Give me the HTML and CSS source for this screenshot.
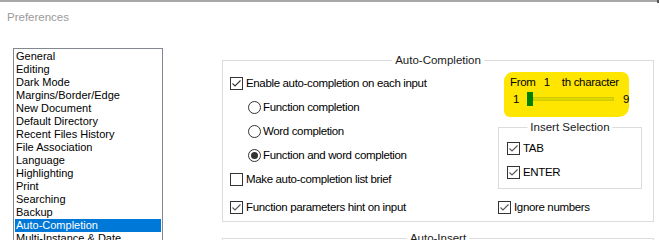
FILE: index.html
```
<!DOCTYPE html>
<html>
<head>
<meta charset="utf-8">
<link rel="stylesheet" href="styles.css">
</head>
<body>
<div class="frame-top"><span class="frame-corner"></span></div>
<div class="title">Preferences</div>
<div class="main">
  <div class="listbox">
    <div class="item">General</div>
    <div class="item">Editing</div>
    <div class="item">Dark Mode</div>
    <div class="item">Margins/Border/Edge</div>
    <div class="item">New Document</div>
    <div class="item">Default Directory</div>
    <div class="item">Recent Files History</div>
    <div class="item">File Association</div>
    <div class="item">Language</div>
    <div class="item">Highlighting</div>
    <div class="item">Print</div>
    <div class="item">Searching</div>
    <div class="item">Backup</div>
    <div class="item selected">Auto-Completion</div>
    <div class="item">Multi-Instance &amp; Date</div>
  </div>
  <div class="panel">
    <div class="group ac">
      <span class="group-title">Auto-Completion</span>
      <div class="ac-body">
        <div class="col-left">
          <div class="row">
            <svg class="box" width="13" height="13" viewBox="0 0 13 13"><rect x="0.5" y="0.5" width="12" height="12" fill="#fff" stroke="#333"/><polyline points="2.5,6.5 5,9 10.5,3.5" fill="none" stroke="#333" stroke-width="1.1"/></svg>
            <span class="lbl">Enable auto-completion on each input</span>
          </div>
          <div class="row sub">
            <svg class="box" width="13" height="13" viewBox="0 0 13 13"><circle cx="6.5" cy="6.5" r="6" fill="#fff" stroke="#333"/></svg>
            <span class="lbl r">Function completion</span>
          </div>
          <div class="row sub">
            <svg class="box" width="13" height="13" viewBox="0 0 13 13"><circle cx="6.5" cy="6.5" r="6" fill="#fff" stroke="#333"/></svg>
            <span class="lbl r">Word completion</span>
          </div>
          <div class="row sub">
            <svg class="box" width="13" height="13" viewBox="0 0 13 13"><circle cx="6.5" cy="6.5" r="6" fill="#fff" stroke="#333"/><circle cx="6.5" cy="6.5" r="3.5" fill="#333"/></svg>
            <span class="lbl r">Function and word completion</span>
          </div>
          <div class="row">
            <svg class="box" width="13" height="13" viewBox="0 0 13 13"><rect x="0.5" y="0.5" width="12" height="12" fill="#fff" stroke="#333"/></svg>
            <span class="lbl">Make auto-completion list brief</span>
          </div>
        </div>
        <div class="col-right">
          <div class="hl">
            <div class="from"><span>From</span><span class="num">1</span><span>th character</span></div>
            <div class="slider">
              <span class="smin">1</span>
              <span class="thumb"></span>
              <span class="track"></span>
              <span class="smax">9</span>
            </div>
          </div>
          <div class="group ins">
            <span class="group-title">Insert Selection</span>
            <div class="row">
              <svg class="box" width="13" height="13" viewBox="0 0 13 13"><rect x="0.5" y="0.5" width="12" height="12" fill="#fff" stroke="#333"/><polyline points="2.5,6.5 5,9 10.5,3.5" fill="none" stroke="#555" stroke-width="1.1"/></svg>
              <span class="lbl">TAB</span>
            </div>
            <div class="row">
              <svg class="box" width="13" height="13" viewBox="0 0 13 13"><rect x="0.5" y="0.5" width="12" height="12" fill="#fff" stroke="#333"/><polyline points="2.5,6.5 5,9 10.5,3.5" fill="none" stroke="#555" stroke-width="1.1"/></svg>
              <span class="lbl">ENTER</span>
            </div>
          </div>
        </div>
      </div>
      <div class="ac-bottom">
        <div class="row bl">
          <svg class="box" width="13" height="13" viewBox="0 0 13 13"><rect x="0.5" y="0.5" width="12" height="12" fill="#fff" stroke="#333"/><polyline points="2.5,6.5 5,9 10.5,3.5" fill="none" stroke="#555" stroke-width="1.1"/></svg>
          <span class="lbl">Function parameters hint on input</span>
        </div>
        <div class="row">
          <svg class="box" width="13" height="13" viewBox="0 0 13 13"><rect x="0.5" y="0.5" width="12" height="12" fill="#fff" stroke="#333"/><polyline points="2.5,6.5 5,9 10.5,3.5" fill="none" stroke="#555" stroke-width="1.1"/></svg>
          <span class="lbl">Ignore numbers</span>
        </div>
      </div>
    </div>
    <div class="group ai">
      <span class="group-title">Auto-Insert</span>
    </div>
  </div>
</div>
</body>
</html>
```

FILE: styles.css
```
html, body {
  margin: 0;
  padding: 0;
  overflow: hidden;
  background: #fff;
}
body {
  width: 659px;
  height: 240px;
  font-family: "Liberation Sans", Arial, sans-serif;
  color: #000;
}
.frame-top {
  height: 2px;
  background: #a8a8a8;
  display: flex;
  justify-content: flex-end;
}
.frame-corner {
  width: 2px;
  height: 3px;
  background: #555;
}
.title {
  margin-top: 8px;
  padding-left: 7px;
  font-size: 11.5px;
  line-height: 14px;
  color: #9a9a9a;
}
.main {
  display: flex;
  align-items: flex-start;
  padding-left: 13px;
  margin-top: 24px;
}
.listbox {
  width: 146px;
  height: 200px;
  border: 1px solid #828790;
  border-bottom: 0;
  padding: 1px;
  font-size: 11px;
  flex: none;
}
.item {
  height: 13px;
  line-height: 13px;
  padding-left: 1px;
  white-space: nowrap;
}
.item.selected {
  background: #0078d7;
  color: #fff;
}
.panel {
  margin-left: 59px;
  margin-top: 12px;
  width: 432px;
  flex: none;
}
.group {
  position: relative;
  border: 1px solid #dcdcdc;
  box-sizing: border-box;
}
.group-title {
  position: absolute;
  top: -8px;
  left: 50%;
  transform: translateX(-50%);
  background: #fff;
  padding: 0 3px;
  font-size: 11.5px;
  line-height: 15px;
  white-space: nowrap;
  color: #1a1a1a;
}
.ac {
  padding-bottom: 2px;
}
.ac-body {
  display: flex;
  padding-top: 10px;
}
.col-left {
  width: 268px;
  padding-left: 7px;
}
.row {
  height: 24px;
  display: flex;
  align-items: center;
  font-size: 11.5px;
  letter-spacing: -0.35px;
  white-space: nowrap;
}
.row.sub {
  padding-left: 18px;
}
.box {
  flex: none;
  display: block;
}
.lbl {
  margin-left: 3px;
}
.lbl.r {
  margin-left: 2px;
}
.col-right {
  width: 154px;
  margin-top: 1px;
}
.hl {
  margin-left: 6px;
  width: 125px;
  height: 45px;
  box-sizing: border-box;
  background: #ffe600;
  border-radius: 9px 7px 10px 6px;
  padding: 3px 0 0 6px;
  font-size: 11.5px;
  letter-spacing: -0.3px;
}
.from {
  line-height: 15px;
  display: flex;
  white-space: nowrap;
}
.from .num {
  margin-left: 8px;
  margin-right: 12px;
}
.slider {
  height: 18px;
  display: flex;
  align-items: center;
}
.smin {
  margin-left: 3px;
  width: 14px;
}
.thumb {
  width: 6px;
  height: 14px;
  background: #008000;
  flex: none;
}
.track {
  width: 81px;
  height: 4px;
  background: #dcd800;
  border: 1px solid #cfcb00;
  box-sizing: border-box;
  flex: none;
}
.smax {
  margin-left: 9px;
}
.ins {
  margin-top: 10px;
  width: 144px;
  height: 62px;
  padding-top: 8px;
  padding-left: 8px;
}
.ac-bottom {
  display: flex;
  margin-top: 4px;
}
.row.bl {
  width: 268px;
  padding-left: 7px;
}
.ai {
  margin-top: 16px;
  height: 30px;
}
```
